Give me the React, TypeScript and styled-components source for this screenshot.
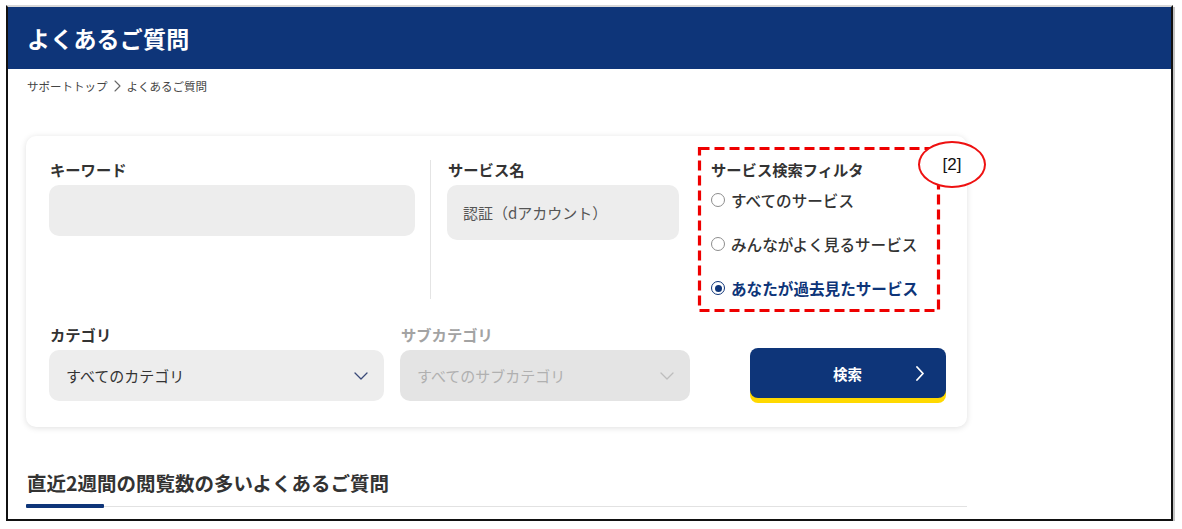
import React from 'react';
import styled, { createGlobalStyle } from 'styled-components';

const GlobalStyle = createGlobalStyle`
    html, body {
        margin: 0;
        padding: 0;
        background: #ffffff;
    }
    body {
        font-family: "Noto Sans CJK JP", "Noto Sans", sans-serif;
        color: #333333;
    }
`

const Frame = styled.div`
    box-sizing: border-box;
    margin: 5px 0 0 6px;
    width: 1167px;
    height: 516px;
    border: 2px solid #111;
    border-top: 2px solid #d8d8d8;
    box-shadow: 2px 2px 0 #c4c4c4;
    overflow: hidden;
    background: #fff;
`

const Header = styled.header`
    height: 62px;
    background: #0e3579;
    display: flex;
    align-items: center;
    padding-left: 19px;
`

const Title = styled.h1`
    margin: 0;
    color: #fff;
    font-size: 23px;
    font-weight: 700;
    letter-spacing: 0.2px;
`

const Main = styled.main`
    padding-left: 18px;
`

const Breadcrumb = styled.nav`
    margin-top: 9px;
    height: 16px;
    display: flex;
    align-items: center;
    gap: 6px;
    font-size: 11.5px;
    color: #444;
    padding-left: 1px;
`

const Card = styled.section`
    box-sizing: border-box;
    margin-top: 42px;
    width: 941px;
    border-radius: 10px;
    background: #fff;
    box-shadow: 0 1px 6px rgba(0, 0, 0, 0.13);
    padding: 23px 21px 26px 23px;
`

const Row = styled.div<{ $top?: number }>`
    display: flex;
    align-items: stretch;
    margin-top: ${p => p.$top ?? 0}px;
`

const Field = styled.div<{ $width: number; $left?: number }>`
    width: ${p => p.$width}px;
    margin-left: ${p => p.$left ?? 0}px;
    flex: none;
`

const Label = styled.div<{ $muted?: boolean; $gap?: number }>`
    font-size: 15.3px;
    line-height: 20px;
    font-weight: 700;
    color: ${p => (p.$muted ? '#a3a3a3' : '#333')};
    margin-bottom: ${p => p.$gap ?? 6}px;
    padding-left: 1px;
`

const Input = styled.div<{ $height: number }>`
    box-sizing: border-box;
    height: ${p => p.$height}px;
    border-radius: 10px;
    background: #ededed;
    padding-left: 16px;
    display: flex;
    align-items: center;
    font-size: 15px;
    color: #555;
`

const Divider = styled.div`
    width: 1px;
    background: #e4e4e4;
    margin: 1px 16px 0 15px;
`

const Filter = styled.div`
    position: relative;
    width: 218px;
    margin-left: 31px;
    flex: none;
`

const RadioList = styled.div`
    display: flex;
    flex-direction: column;
    gap: 22px;
`

const RadioRow = styled.div<{ $checked?: boolean }>`
    height: 22px;
    display: flex;
    align-items: center;
    gap: 6px;
    font-size: 15.6px;
    font-weight: ${p => (p.$checked ? 700 : 500)};
    color: ${p => (p.$checked ? '#0e3579' : '#333')};
    white-space: nowrap;
`

const RadioMark = styled.span<{ $checked?: boolean }>`
    box-sizing: border-box;
    width: 14px;
    height: 14px;
    border-radius: 50%;
    flex: none;
    margin-left: 1px;
    border: ${p => (p.$checked ? '1.6px solid #0e3579' : '1px solid #8d8d8d')};
    display: flex;
    align-items: center;
    justify-content: center;
    &::after {
        content: '';
        display: ${p => (p.$checked ? 'block' : 'none')};
        width: 7px;
        height: 7px;
        border-radius: 50%;
        background: #0e3579;
    }
`

const DashedBox = styled.svg`
    position: absolute;
    top: -12px;
    left: -12px;
    width: calc(100% + 24px);
    height: calc(100% + 25px);
    overflow: visible;
    pointer-events: none;
`

const Callout = styled.div`
    position: absolute;
    box-sizing: border-box;
    left: 208px;
    top: -18px;
    width: 68px;
    height: 47px;
    border: 2px solid #ee1111;
    border-radius: 50%;
    background: #fff;
    display: flex;
    align-items: center;
    justify-content: center;
    font-family: "Liberation Sans", Arial, sans-serif;
    font-size: 17px;
    color: #111;
    padding-top: 1px;
`

const Select = styled.div<{ $disabled?: boolean }>`
    box-sizing: border-box;
    height: 51px;
    border-radius: 10px;
    background: ${p => (p.$disabled ? '#e4e4e4' : '#ededed')};
    color: ${p => (p.$disabled ? '#b0b0b0' : '#333')};
    padding: 0 16px 0 17px;
    display: flex;
    align-items: center;
    justify-content: space-between;
    font-size: 15px;
`

const SearchButton = styled.button`
    box-sizing: border-box;
    width: 196px;
    height: 50px;
    margin: 0 0 3px 60px;
    align-self: flex-end;
    border: none;
    border-radius: 8px;
    background: #0e3579;
    box-shadow: 0 5px 0 #ffd900;
    color: #fff;
    font-family: inherit;
    font-size: 14.5px;
    font-weight: 700;
    display: flex;
    align-items: center;
    justify-content: space-between;
    padding: 0 22px 0 83px;
`

const SectionTitle = styled.h2`
    margin: 43px 0 0;
    font-size: 19.5px;
    line-height: 26px;
    font-weight: 700;
    color: #333;
    padding-left: 1px;
`

const Rule = styled.div`
    margin-top: 8px;
    width: 941px;
    height: 4px;
    display: flex;
    align-items: center;
`

const RuleBar = styled.div`
    width: 78px;
    height: 4px;
    background: #0e3579;
    border-radius: 1px;
`

const RuleLine = styled.div`
    flex: 1;
    height: 1px;
    background: #e2e2e2;
    margin-top: 1px;
`

const Chevron = ({ color, w = 14, h = 8 }: { color: string; w?: number; h?: number }) => (
    <svg width={w} height={h} viewBox="0 0 14 8" fill="none">
        <polyline points="1,1 7,7 13,1" stroke={color} strokeWidth="1.3" strokeLinecap="round" strokeLinejoin="round" />
    </svg>
);

const ArrowRight = ({ color, w, h, sw }: { color: string; w: number; h: number; sw: number }) => (
    <svg width={w} height={h} viewBox={`0 0 ${w} ${h}`} fill="none">
        <polyline points={`1,1 ${w - 1},${h / 2} 1,${h - 1}`} stroke={color} strokeWidth={sw} strokeLinecap="round" strokeLinejoin="round" />
    </svg>
);

const radios = [
    { label: 'すべてのサービス', checked: false },
    { label: 'みんながよく見るサービス', checked: false },
    { label: 'あなたが過去見たサービス', checked: true },
];

const App: React.FC = () => {
    return <>
        <GlobalStyle />
        <Frame>
            <Header>
                <Title>よくあるご質問</Title>
            </Header>
            <Main>
                <Breadcrumb>
                    <span>サポートトップ</span>
                    <ArrowRight color="#666" w={7} h={12} sw={1.1} />
                    <span>よくあるご質問</span>
                </Breadcrumb>

                <Card>
                    <Row>
                        <Field $width={366}>
                            <Label>キーワード</Label>
                            <Input $height={51} />
                        </Field>
                        <Divider />
                        <Field $width={232}>
                            <Label>サービス名</Label>
                            <Input $height={55}>認証（dアカウント）</Input>
                        </Field>
                        <Filter>
                            <Label $gap={10}>サービス検索フィルタ</Label>
                            <RadioList>
                                {radios.map(r => (
                                    <RadioRow key={r.label} $checked={r.checked}>
                                        <RadioMark $checked={r.checked} />
                                        {r.label}
                                    </RadioRow>
                                ))}
                            </RadioList>
                            <DashedBox>
                                <rect x="1.5" y="1.5"
                                    style={{ width: 'calc(100% - 3px)', height: 'calc(100% - 3px)' }}
                                    fill="none" stroke="#ee0000" strokeWidth="3.2" strokeDasharray="10 5" />
                            </DashedBox>
                            <Callout>[2]</Callout>
                        </Filter>
                    </Row>

                    <Row $top={25}>
                        <Field $width={335}>
                            <Label $gap={6}>カテゴリ</Label>
                            <Select>
                                <span>すべてのカテゴリ</span>
                                <Chevron color="#3a4a78" />
                            </Select>
                        </Field>
                        <Field $width={290} $left={16}>
                            <Label $gap={6} $muted>サブカテゴリ</Label>
                            <Select $disabled>
                                <span>すべてのサブカテゴリ</span>
                                <Chevron color="#bdbdbd" />
                            </Select>
                        </Field>
                        <SearchButton>
                            <span>検索</span>
                            <ArrowRight color="#fff" w={8} h={15} sw={1.8} />
                        </SearchButton>
                    </Row>
                </Card>

                <SectionTitle>直近2週間の閲覧数の多いよくあるご質問</SectionTitle>
                <Rule>
                    <RuleBar />
                    <RuleLine />
                </Rule>
            </Main>
        </Frame>
    </>;
}

export default App;
